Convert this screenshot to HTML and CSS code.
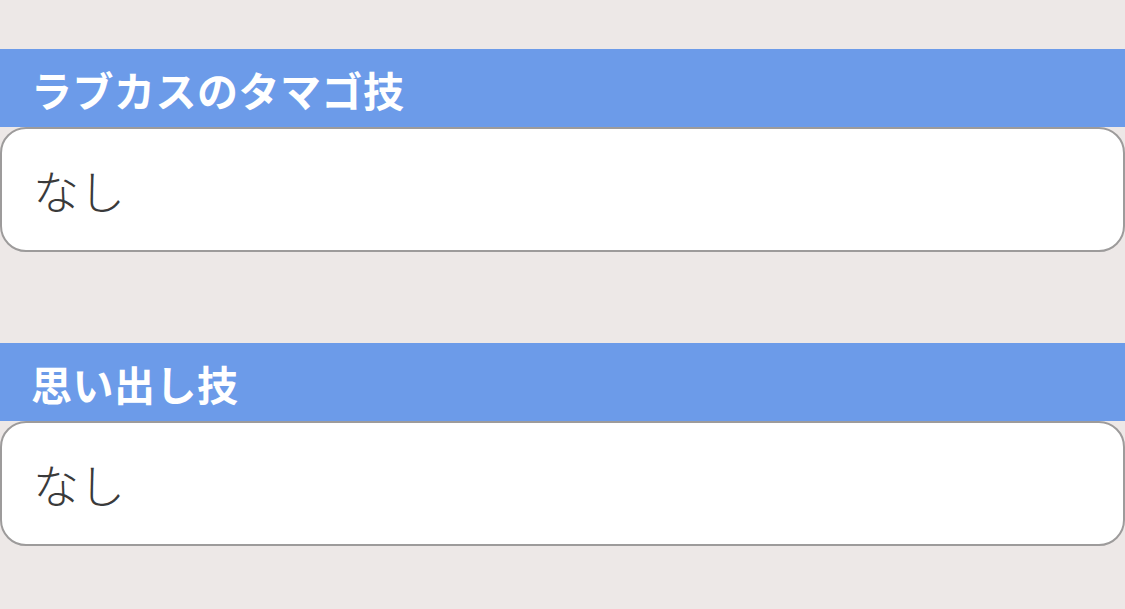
FILE: index.html
```html
<!DOCTYPE html>
<html lang="ja">
<head>
    <meta charset="UTF-8">
    <meta name="viewport" content="width=device-width, initial-scale=1.0">
    <title>技</title>
    <link rel="stylesheet" href="styles.css">
</head>
<body>
    <div class="moves">
        <section class="move-block">
            <h2 class="move-title">ラブカスのタマゴ技</h2>
            <div class="move-box">なし</div>
        </section>

        <section class="move-block">
            <h2 class="move-title">思い出し技</h2>
            <div class="move-box">なし</div>
        </section>
    </div>
</body>
</html>
```

FILE: styles.css
```css
* {
    margin: 0;
    padding: 0;
    box-sizing: border-box;
}

body {
    font-family: "Noto Sans CJK JP", "Noto Sans", sans-serif;
    background: #ede8e7;
    min-height: 100vh;
}

.moves {
    display: flex;
    flex-direction: column;
    gap: 91px;
    padding-top: 49px;
}

.move-block {
    display: flex;
    flex-direction: column;
}

.move-title {
    background: #6c9be9;
    color: white;
    height: 78px;
    display: flex;
    align-items: center;
    padding: 2px 0 0 31px;
    font-size: 41px;
    font-weight: 700;
    letter-spacing: 0.5px;
}

.move-box {
    background: white;
    border: 2px solid #9d9b9b;
    border-radius: 26px;
    height: 125px;
    display: flex;
    align-items: center;
    padding: 0 0 2px 31px;
    font-size: 46px;
    font-weight: 300;
    color: #3a3a3a;
}
```
